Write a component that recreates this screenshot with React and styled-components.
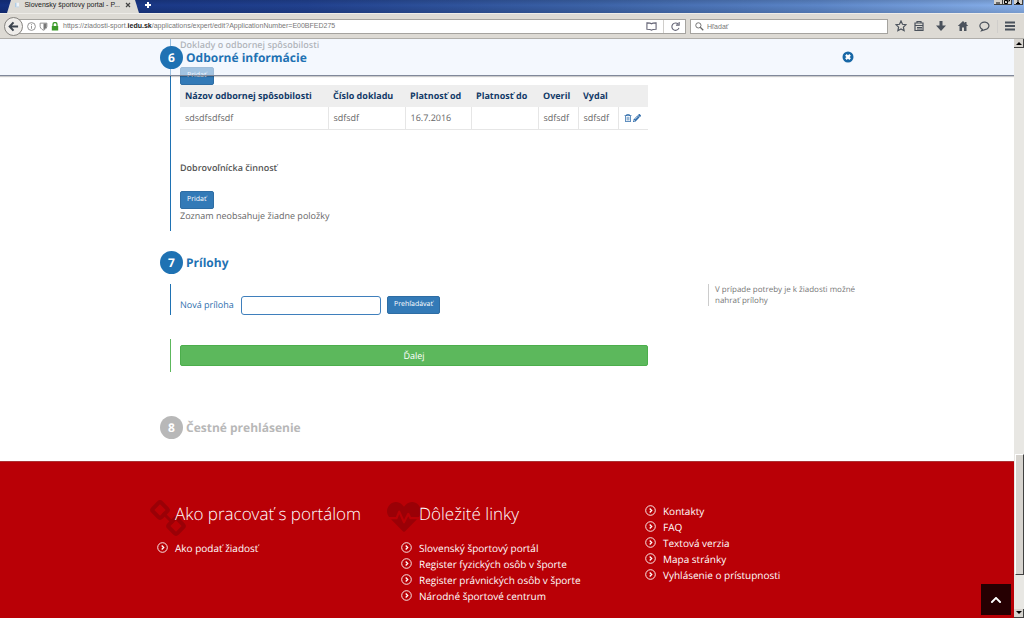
import React from "react";
import styled, { createGlobalStyle } from "styled-components";
import { FaHeartbeat, FaPencilAlt, FaRegTrashAlt, FaChevronUp } from "react-icons/fa";

const sans = `"Open Sans", "Noto Sans", sans-serif`;
const chromeFont = `"Liberation Sans", Arial, sans-serif`;
const blue = "#1f72b3";

const Global = createGlobalStyle`
  * { box-sizing: border-box; }
  body { margin: 0; background: #fff; font-family: ${sans}; font-size: 9px; color: #666; }
  button, input { font-family: inherit; margin: 0; text-rendering: inherit; }
  button { cursor: pointer; }
  h2, h3, p, ul { margin: 0; padding: 0; font-weight: inherit; }
`;

const Shell = styled.div`
  height: 100vh;
  display: flex;
  flex-direction: column;
  overflow: hidden;
`;

const TabStrip = styled.div`
  height: 13px;
  flex: none;
  display: flex;
  align-items: flex-start;
  background: linear-gradient(180deg, #0002, #0000 40%, #0002), linear-gradient(90deg, #14307f 0%, #21418f 30%, #3c63a8 58%, #5c86c8 80%, #8ab2ec 100%);
  font-family: ${chromeFont};
`;

const Tab = styled.div`
  display: flex;
  align-items: center;
  gap: 5px;
  width: 132px;
  height: 13px;
  margin-left: 7px;
  padding: 0 8px 3px 8px;
  background: #dddbd6;
  clip-path: polygon(4px 0, 128px 0, 132px 100%, 0 100%);
  color: #222;
  font-size: 7px;
  line-height: 10px;
  white-space: nowrap;
`;

const TabTitle = styled.span`
  flex: 1;
`;

const PlainButton = styled.button`
  display: inline-flex;
  align-items: center;
  justify-content: center;
  padding: 0;
  border: 0;
  background: none;
  color: inherit;
`;

const NewTab = styled(PlainButton)`
  width: 18px;
  height: 10px;
  color: #fff;
`;

const WindowButtons = styled.div`
  display: flex;
  margin-left: auto;
  padding-right: 1px;
`;

const WindowButton = styled(PlainButton)`
  width: 9px;
  height: 5px;
  margin-left: ${(p) => (p.$gap ? "2px" : "0")};
  background: #d6d3ce;
  border: 1px solid #404040;
  border-width: 0 1px 1px 0;
  color: #000;
`;

const NavBar = styled.div`
  height: 26px;
  flex: none;
  display: flex;
  align-items: center;
  gap: 4px;
  padding: 0 8px 0 4px;
  background: #dddad4;
  border-top: 1px solid #eeece8;
  border-bottom: 1px solid #b0aeaa;
  font-family: ${chromeFont};
  color: #4b525c;
`;

const Back = styled(PlainButton)`
  position: relative;
  z-index: 1;
  flex: none;
  width: 19px;
  height: 19px;
  border: 1px solid #85837f;
  border-radius: 50%;
  background: #efedea;
  color: #3d454f;
`;

const Field = styled.label`
  position: relative;
  display: flex;
  align-items: center;
  height: 15px;
  gap: 3px;
  padding: 0 4px;
  background: #fff;
  border: 1px solid #a5a39f;
  color: #777;
  font-size: 7px;
  line-height: 10px;
`;

const UrlField = styled(Field)`
  flex: 1;
  margin-left: -8px;
  padding-left: 7px;
`;

const SearchField = styled(Field)`
  width: 198px;
`;

const BareInput = styled.input`
  flex: 1;
  min-width: 0;
  padding: 0;
  border: 0;
  outline: 0;
  background: transparent;
  color: #333;
  font-size: 7px;
  &::placeholder { color: #777; opacity: 1; }
`;

const Address = styled.span`
  padding-left: 1px;
  white-space: nowrap;
  b { color: #222; font-weight: 700; }
`;

const FieldDivider = styled.span`
  width: 1px;
  height: 13px;
  margin: 0 ${(p) => (p.$wide ? "3px" : "0")};
  background: #d0cecb;
`;

const Tools = styled.div`
  display: flex;
  align-items: center;
  gap: 10px;
  padding-left: 3px;
`;

const ToolGroup = styled.div`
  display: flex;
  align-items: center;
  gap: 6px;
`;

const ToolButton = styled(PlainButton)`
  width: 12px;
  height: 14px;
`;

const View = styled.div`
  flex: 1;
  min-height: 0;
  display: grid;
  grid-template-columns: minmax(0, 1fr) 10px;
`;

const Page = styled.div`
  position: relative;
  display: flex;
  flex-direction: column;
  overflow: hidden;
  background: #fff;
  text-rendering: geometricPrecision;
`;

const Scrollbar = styled.div`
  display: flex;
  flex-direction: column;
  background: #e8e7e3;
`;

const ScrollArrow = styled(PlainButton)`
  height: 9px;
  background: #d6d3ce;
  border: 1px solid #404040;
  border-width: 0 1px 1px 0;
  color: #000;
`;

const ScrollTrack = styled.div`
  flex: 1;
  display: flex;
  flex-direction: column;
  justify-content: flex-end;
  padding-bottom: 34px;
`;

const ScrollThumb = styled.div`
  height: 121px;
  margin-left: 1px;
  background: #d6d3ce;
  border: 1px solid #fff;
  border-right: 1px solid #404040;
  border-bottom: 1px solid #404040;
`;

const StickyBar = styled.div`
  position: absolute;
  z-index: 2;
  top: 0;
  left: 0;
  right: 0;
  height: 37px;
  background: rgba(236, 244, 254, 0.6);
  border-bottom: 1px solid #80889a;
  box-shadow: 0 1px 1px #0003;
`;

const Container = styled.div`
  width: 100%;
  max-width: 694px;
  margin: 0 auto;
`;

const StickyInner = styled(Container)`
  display: flex;
  align-items: center;
  justify-content: space-between;
  height: 36px;
`;

const StepHeading = styled.h2`
  display: flex;
  align-items: center;
  gap: 3px;
  color: ${(p) => (p.$muted ? "#b8b8b8" : blue)};
  font-size: 12px;
  line-height: 23px;
  font-weight: 700;
`;

const StepNumber = styled.span`
  width: 23px;
  height: 23px;
  border-radius: 50%;
  background: ${(p) => (p.$muted ? "#b8b8b8" : blue)};
  color: #fff;
  text-align: center;
`;

const StepBody = styled.div`
  display: flex;
  gap: 60px;
  align-items: flex-start;
  margin-left: 10px;
`;

const Rail = styled.section`
  flex: none;
  width: 478px;
  padding: ${(p) => p.$pad || "0"};
  padding-left: 9px;
  border-left: 1px solid ${(p) => p.$color || blue};
`;

const SubHeading = styled.h3`
  font-size: 9px;
  line-height: 12px;
  font-weight: 600;
  color: #555;
`;

const SmallButton = styled.button`
  display: block;
  height: 18px;
  padding: 0 6px;
  border: 1px solid #2e6da4;
  border-radius: 2px;
  background: #337ab7;
  color: #fff;
  font-size: 7px;
  font-weight: 500;
  line-height: 16px;
`;

const Table = styled.table`
  width: 100%;
  border-collapse: collapse;
  table-layout: fixed;
  font-size: 9px;
  line-height: 12px;
  th, td { height: 22px; padding: 0 5px; text-align: left; white-space: nowrap; }
  th { background: #eee; color: #123a68; font-weight: 700; }
  td { border-right: 1px solid #e6e6e6; border-bottom: 1px solid #e6e6e6; }
  td:last-child { border-right: 0; }
`;

const RowActions = styled.div`
  display: flex;
  gap: 1px;
  color: #2f6cab;
`;

const Note = styled.p`
  line-height: 13px;
`;

const FormRow = styled.div`
  display: flex;
  align-items: center;
`;

const FormLabel = styled.label`
  width: 61px;
  color: #2f6fae;
  line-height: 12px;
`;

const TextInput = styled.input`
  width: 140px;
  height: 19px;
  margin-right: 6px;
  padding: 0 4px;
  border: 1px solid #3f7fbc;
  border-radius: 3px;
  background: #fff;
  font-size: 9px;
`;

const Hint = styled.aside`
  flex: none;
  width: 152px;
  padding-left: 6px;
  border-left: 1px solid #ccc;
  color: #777;
  font-size: 8px;
  line-height: 11px;
`;

const NextButton = styled.button`
  display: block;
  width: 100%;
  height: 21px;
  border: 1px solid #4cae4c;
  border-radius: 2px;
  background: #5cb85c;
  color: #fff;
  font-size: 9px;
`;

const Spacer = styled.div`
  height: ${(p) => p.$h}px;
  flex: none;
`;

const Footer = styled.footer`
  flex: 1;
  border-top: 1px solid #a33;
  background: #b90006;
  color: #fff;
`;

const FooterGrid = styled.div`
  display: grid;
  grid-template-columns: 244px 244px 1fr;
  max-width: 712px;
  margin: 0 auto;
  padding-top: 38px;
`;

const FooterColumn = styled.div`
  padding-top: ${(p) => (p.$bare ? "3px" : "0")};
`;

const FooterTitle = styled.h3`
  position: relative;
  height: 40px;
  padding-left: 24px;
  font-size: 17px;
  line-height: 28px;
  font-weight: 300;
`;

const TitleIcon = styled.span`
  position: absolute;
  z-index: 0;
  top: 0;
  left: ${(p) => (p.$left ? "-8px" : "-1px")};
  color: #9a0006;
  line-height: 0;
`;

const TitleText = styled.span`
  position: relative;
`;

const LinkList = styled.ul`
  list-style: none;
  padding-left: 6px;
`;

const FooterLink = styled.a`
  display: flex;
  align-items: center;
  gap: 7px;
  height: 16px;
  color: #fff;
  font-size: 10px;
  text-decoration: none;
`;

const ToTop = styled.button`
  position: absolute;
  right: 3px;
  bottom: 3px;
  width: 30px;
  height: 31px;
  display: flex;
  align-items: center;
  justify-content: center;
  padding: 0;
  border: 0;
  background: #260002;
  color: #fff;
`;

const RingArrow = () => (
  <svg width="11" height="11" viewBox="0 0 11 11" fill="none" stroke="#fff">
    <circle cx="5.5" cy="5.5" r="4.8" strokeWidth="0.9" />
    <path d="M4.700 3.500 6.700 5.500 4.700 7.500" strokeWidth="1.300" />
  </svg>
);

const ChainIcon = () => (
  <svg width="36" height="37" viewBox="0 0 36 37" fill="none" stroke="currentColor" strokeWidth="4">
    <rect x="4" y="4" width="12" height="12" rx="2" transform="rotate(45 10 10)" />
    <rect x="20" y="20" width="12" height="12" rx="2" transform="rotate(45 26 26)" />
    <path d="M13 13l10 10" strokeWidth="3" />
  </svg>
);

const Glyph = ({ size = 12, children }) => (
  <svg width={size} height={size} viewBox="0 0 12 12" fill="none" stroke="currentColor" strokeWidth="1.2">
    {children}
  </svg>
);

const Links = ({ items }) => (
  <LinkList>
    {items.map((text) => (
      <li key={text}>
        <FooterLink href="#">
          <RingArrow />
          {text}
        </FooterLink>
      </li>
    ))}
  </LinkList>
);

const columns = [
  ["Názov odbornej spôsobilosti", 148],
  ["Číslo dokladu", 77],
  ["Platnosť od", 66],
  ["Platnosť do", 67],
  ["Overil", 40],
  ["Vydal", 40],
  ["", 30],
];

const BrowserChrome = () => (
  <>
    <TabStrip>
      <Tab>
        <svg width="9" height="8" viewBox="0 0 8 8">
          <path d="M0 0h8v8H0z" fill="#eef3f8" />
          <path d="M1.5 0v8" stroke="#4a90c8" />
          <path d="M3 7.5h5" stroke="#9bbbd8" />
        </svg>
        <TabTitle>Slovensky športovy portal - P...</TabTitle>
        <PlainButton aria-label="Zavrieť kartu">
          <svg width="6" height="6" viewBox="0 0 6 6" stroke="#444" strokeWidth="1.2"><path d="M1 1l4 4M5 1 1 5" /></svg>
        </PlainButton>
      </Tab>
      <NewTab aria-label="Nová karta">
        <svg width="8" height="8" viewBox="0 0 8 8" stroke="#fff" strokeWidth="2"><path d="M4 1v6M1 4h6" /></svg>
      </NewTab>
      <WindowButtons>
        <WindowButton aria-label="Minimalizovať"><svg width="5" height="3"><path d="M0 2h4" stroke="#000" /></svg></WindowButton>
        <WindowButton aria-label="Obnoviť"><svg width="6" height="4" fill="none" stroke="#000"><path d="M2.500 0v1h3v-1M.5.500h3v3h-3z" /></svg></WindowButton>
        <WindowButton $gap aria-label="Zavrieť"><svg width="6" height="4" stroke="#000"><path d="M1 4l2-2 2 2M3 2V0" /></svg></WindowButton>
      </WindowButtons>
    </TabStrip>
    <NavBar>
      <Back aria-label="Späť">
        <svg width="11" height="11" viewBox="0 0 12 12" fill="none" stroke="currentColor" strokeWidth="2.200"><path d="M11 6H2M6 1.500 1.800 6 6 10.500" /></svg>
      </Back>
      <UrlField>
        <Glyph size={9}><circle cx="6" cy="6" r="5.200" stroke="#888" /><path d="M6 5v4M6 2.500v1.300" stroke="#888" /></Glyph>
        <Glyph size={9}><path d="M1.500 1.500h9V6c0 3-4.500 5-4.500 5S1.500 9 1.500 6z" stroke="#888" /><path d="M6 2v8.500C8 9 10 8 10 6V2z" fill="#777" stroke="none" /></Glyph>
        <svg width="8" height="9" viewBox="0 0 8 9"><path d="M2 4V2.500a2 2 0 0 1 4 0V4" fill="none" stroke="#3c9a28" strokeWidth="1.300" /><path d="M.8 4h6.400v4.500H.8z" fill="#3c9a28" /></svg>
        <Address>
          https://ziadosti-sport.<b>iedu.sk</b>/applications/expert/edit?ApplicationNumber=E00BFED275
        </Address>
        <BareInput aria-label="Adresa" />
        <Glyph size={11}><path d="M6 3C5 2 1 2 1 2v7s4 0 5 1c1-1 5-1 5-1V2S7 2 6 3z" stroke="#667" /></Glyph>
        <FieldDivider $wide />
        <PlainButton aria-label="Obnoviť stránku">
          <Glyph size={11}><path d="M9.800 7.500A4 4 0 1 1 9 3.500M10 1v3.500H6.500" stroke="#667" /></Glyph>
        </PlainButton>
      </UrlField>
      <SearchField>
        <Glyph size={9}><circle cx="4.500" cy="4.500" r="3.500" stroke="#666" /><path d="M7 7l4 4" stroke="#666" strokeWidth="1.600" /></Glyph>
        <BareInput aria-label="Hľadať" placeholder="Hľadať" />
      </SearchField>
      <Tools>
        <ToolGroup>
          <ToolButton aria-label="Záložky"><Glyph><path d="M6 1l1.500 3.300 3.500.4-2.600 2.400.7 3.600L6 9 2.900 10.700l.7-3.600L1 4.700l3.500-.4z" /></Glyph></ToolButton>
          <ToolButton aria-label="Zoznam"><Glyph><path d="M2 3h8v7.500H2zM4 3V1.500h4V3M2 5.500h8M4 7.500h5M4 9h5" /></Glyph></ToolButton>
        </ToolGroup>
        <ToolButton aria-label="Stiahnuté"><Glyph><path d="M4.500 1h3v4.500H11L6 11 1 5.500h3.500z" fill="currentColor" stroke="none" /></Glyph></ToolButton>
        <ToolButton aria-label="Domov"><Glyph><path d="M6 1 .8 6H2.500v5H5V7.500h2V11h2.500V6h1.700L9.500 4.300V2H8v1z" fill="currentColor" stroke="none" /></Glyph></ToolButton>
        <ToolGroup>
          <ToolButton aria-label="Správy"><Glyph><path d="M3.300 9.200A4.500 3.800 0 1 1 6 9.600L2.500 10.700z" /></Glyph></ToolButton>
          <FieldDivider />
          <ToolButton aria-label="Ponuka"><Glyph><path d="M1 2.500h10M1 6h10M1 9.500h10" strokeWidth="1.800" /></Glyph></ToolButton>
        </ToolGroup>
      </Tools>
    </NavBar>
  </>
);

export default function App() {
  return (
    <Shell>
      <Global />
      <BrowserChrome />
      <View>
        <Page>
          <StickyBar>
            <StickyInner>
              <StepHeading><StepNumber>6</StepNumber>Odborné informácie</StepHeading>
              <PlainButton aria-label="Zavrieť">
                <svg width="12" height="12" viewBox="0 0 12 12">
                  <circle cx="6" cy="6" r="5.500" fill="#1767a6" />
                  <path d="M3.900 3.900l4.200 4.200M8.100 3.900 3.900 8.100" stroke="#fff" strokeWidth="2.200" />
                </svg>
              </PlainButton>
            </StickyInner>
          </StickyBar>

          <Container>
            <StepBody>
              <Rail $pad="0 0 9px">
                <SubHeading>Doklady o odbornej spôsobilosti</SubHeading>
                <Spacer $h={16} />
                <SmallButton>Pridať</SmallButton>
                <Table>
                  <colgroup>{columns.map(([name, w]) => <col key={name} style={{ width: w }} />)}</colgroup>
                  <thead>
                    <tr>{columns.map(([name]) => <th key={name} scope="col">{name}</th>)}</tr>
                  </thead>
                  <tbody>
                    <tr>
                      <td>sdsdfsdfsdf</td>
                      <td>sdfsdf</td>
                      <td>16.7.2016</td>
                      <td />
                      <td>sdfsdf</td>
                      <td>sdfsdf</td>
                      <td>
                        <RowActions>
                          <PlainButton aria-label="Odstrániť"><FaRegTrashAlt size={8} /></PlainButton>
                          <PlainButton aria-label="Upraviť"><FaPencilAlt size={8} /></PlainButton>
                        </RowActions>
                      </td>
                    </tr>
                  </tbody>
                </Table>
                <Spacer $h={32} />
                <SubHeading>Dobrovoľnícka činnosť</SubHeading>
                <Spacer $h={17} />
                <SmallButton>Pridať</SmallButton>
                <Note>Zoznam neobsahuje žiadne položky</Note>
              </Rail>
            </StepBody>
            <Spacer $h={20} />
            <StepHeading><StepNumber>7</StepNumber>Prílohy</StepHeading>
            <Spacer $h={10} />
            <StepBody>
              <Rail $pad="12px 0 0">
                <FormRow>
                  <FormLabel htmlFor="attachment">Nová príloha</FormLabel>
                  <TextInput id="attachment" type="text" />
                  <SmallButton>Prehľadávať</SmallButton>
                </FormRow>
              </Rail>
              <Hint>V prípade potreby je k žiadosti možné nahrať prílohy</Hint>
            </StepBody>
            <Spacer $h={24} />
            <StepBody>
              <Rail $color="#5cb85c" $pad="6px 0">
                <NextButton>Ďalej</NextButton>
              </Rail>
            </StepBody>
            <Spacer $h={44} />
            <StepHeading $muted><StepNumber $muted>8</StepNumber>Čestné prehlásenie</StepHeading>
            <Spacer $h={22} />
          </Container>

          <Footer>
            <FooterGrid>
              <FooterColumn>
                <FooterTitle>
                  <TitleIcon><ChainIcon /></TitleIcon>
                  <TitleText>Ako pracovať s portálom</TitleText>
                </FooterTitle>
                <Links items={["Ako podať žiadosť"]} />
              </FooterColumn>
              <FooterColumn>
                <FooterTitle>
                  <TitleIcon $left><FaHeartbeat size={34} /></TitleIcon>
                  <TitleText>Dôležité linky</TitleText>
                </FooterTitle>
                <Links items={["Slovenský športový portál", "Register fyzických osôb v športe", "Register právnických osôb v športe", "Národné športové centrum"]} />
              </FooterColumn>
              <FooterColumn $bare>
                <Links items={["Kontakty", "FAQ", "Textová verzia", "Mapa stránky", "Vyhlásenie o prístupnosti"]} />
              </FooterColumn>
            </FooterGrid>
          </Footer>
          <ToTop aria-label="Hore"><FaChevronUp size={12} /></ToTop>
        </Page>
        <Scrollbar>
          <ScrollArrow aria-label="Posunúť hore"><svg width="6" height="4"><path d="M0 4l3-3 3 3z" /></svg></ScrollArrow>
          <ScrollTrack><ScrollThumb /></ScrollTrack>
          <ScrollArrow aria-label="Posunúť dole"><svg width="6" height="4"><path d="M0 0l3 3 3-3z" /></svg></ScrollArrow>
        </Scrollbar>
      </View>
    </Shell>
  );
}
